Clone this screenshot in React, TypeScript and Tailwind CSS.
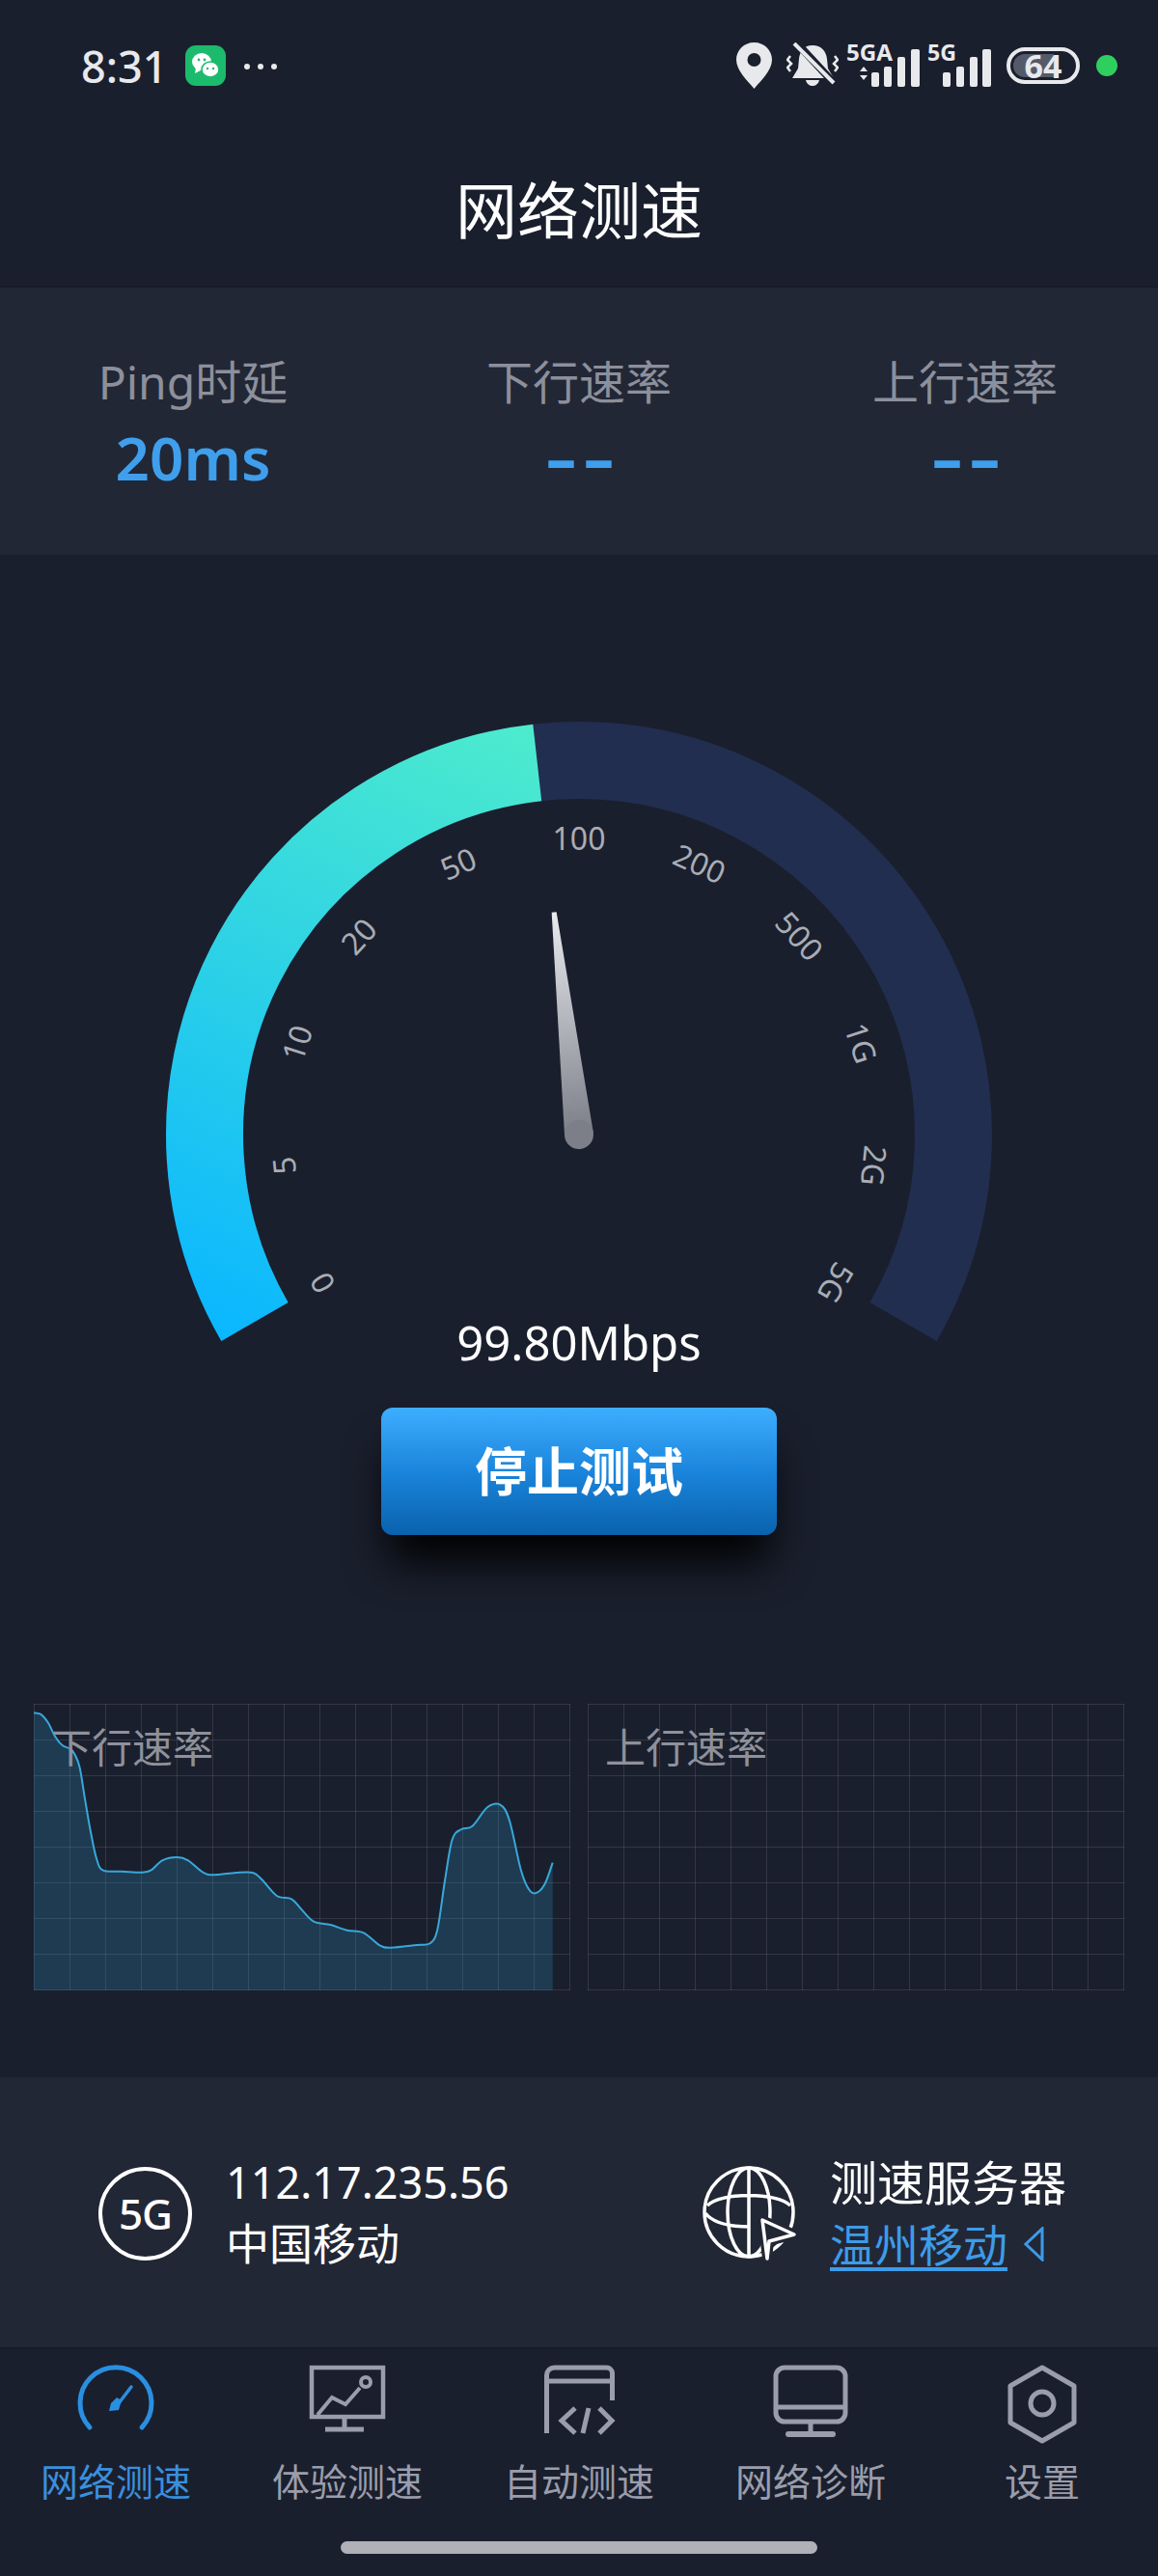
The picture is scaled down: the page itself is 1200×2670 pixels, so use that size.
import React from 'react';

const LABELS = ['0', '5', '10', '20', '50', '100', '200', '500', '1G', '2G', '5G'];

// curve traced off the reference, x/y in chart pixels
const CURVE: [number, number][] = [
  [92,106],[110,110],[130,135],[150,180],[170,208],[195,222],[215,270],[230,370],[245,470],[262,560],[280,596],
  [330,599],[385,602],[410,595],[440,565],[480,555],[510,565],[550,602],[580,610],[640,603],[685,603],[710,625],
  [750,675],[790,685],[815,715],[850,755],[895,765],[940,782],[985,790],[1030,830],[1060,836],[1130,828],[1165,823],
  [1185,780],[1205,630],[1225,500],[1250,468],[1280,458],[1320,400],[1355,392],[1380,440],[1410,590],[1430,650],
  [1450,667],[1475,640],[1497,572],
].map(([x, y]) => [(x - 92) / 2.613, (y - 78) / 3] as [number, number]);

const smoothPath = (pts: [number, number][]) => {
  let d = `M${pts[0][0].toFixed(1)} ${pts[0][1].toFixed(1)}`;
  for (let i = 0; i < pts.length - 1; i++) {
    const p0 = pts[Math.max(i - 1, 0)];
    const p1 = pts[i];
    const p2 = pts[i + 1];
    const p3 = pts[Math.min(i + 2, pts.length - 1)];
    const c1x = p1[0] + (p2[0] - p0[0]) / 6;
    const c1y = p1[1] + (p2[1] - p0[1]) / 6;
    const c2x = p2[0] - (p3[0] - p1[0]) / 6;
    const c2y = p2[1] - (p3[1] - p1[1]) / 6;
    d += `C${c1x.toFixed(1)} ${c1y.toFixed(1)} ${c2x.toFixed(1)} ${c2y.toFixed(1)} ${p2[0].toFixed(1)} ${p2[1].toFixed(1)}`;
  }
  return d;
};

const polar = (deg: number, r: number) => {
  const a = (deg * Math.PI) / 180;
  return [600 + r * Math.sin(a), 1176 - r * Math.cos(a)];
};

const arc = (from: number, to: number, r: number) => {
  const [x1, y1] = polar(from, r);
  const [x2, y2] = polar(to, r);
  return `M${x1} ${y1}A${r} ${r} 0 ${to - from > 180 ? 1 : 0} 1 ${x2} ${y2}`;
};

const Gauge = () => (
  <svg viewBox="160 740 880 655" className="mx-auto block h-[655px] w-[880px]">
    <defs>
      <linearGradient id="progress" gradientUnits="userSpaceOnUse" x1="250" y1="1390" x2="540" y2="750">
        <stop offset="0" stopColor="#0bb7ff" />
        <stop offset="1" stopColor="#4debcd" />
      </linearGradient>
      <linearGradient id="needle" gradientUnits="userSpaceOnUse" x1="600" y1="944" x2="600" y2="1176">
        <stop offset="0" stopColor="#e9eaef" />
        <stop offset="1" stopColor="#7c7e88" />
      </linearGradient>
    </defs>
    <path d={arc(-120, 120, 388)} fill="none" stroke="#212e4f" strokeWidth={80} />
    <path d={arc(-120, -6.4, 388)} fill="none" stroke="url(#progress)" strokeWidth={80} />
    {LABELS.map((label, i) => {
      const deg = -120 + i * 24;
      return (
        <text
          key={label}
          x={600}
          y={868}
          fontSize={32}
          fill="#a9adb5"
          textAnchor="middle"
          dominantBaseline="central"
          transform={`rotate(${deg} 600 1176)`}
        >
          {label}
        </text>
      );
    })}
    <g transform="rotate(-6.4 600 1176)">
      <polygon points="597.5,944 602.5,944 615,1176 585,1176" fill="url(#needle)" />
      <circle cx={600} cy={1176} r={15} fill="#7c7e88" />
    </g>
  </svg>
);

const SpeedChart = ({ label, curve }: { label: string; curve?: boolean }) => {
  const line = curve ? smoothPath(CURVE) : '';
  const lastX = CURVE[CURVE.length - 1][0];
  return (
    <div className="relative h-[298px] w-[556px]">
      <svg viewBox="0 0 556 298" className="block h-[298px] w-[556px]">
        {Array.from({ length: 16 }, (_, i) => (
          <line key={i} x1={i * 37 + 0.5} x2={i * 37 + 0.5} y1={0} y2={297} stroke="#ffffff" strokeOpacity={0.11} />
        ))}
        {Array.from({ length: 9 }, (_, i) => (
          <line key={i} y1={i * 37 + 0.5} y2={i * 37 + 0.5} x1={0} x2={556} stroke="#ffffff" strokeOpacity={0.11} />
        ))}
        {curve && (
          <>
            <path d={`${line}L${lastX} 297L0 297Z`} fill="#2c9ad0" fillOpacity={0.23} />
            <path d={line} fill="none" stroke="#38a8da" strokeWidth={2} />
          </>
        )}
      </svg>
      <div className="absolute left-[18px] top-[21px] text-[42px] leading-[48px] text-[#8e919b]">{label}</div>
    </div>
  );
};

const Stat = ({ label, value, dashes }: { label: string; value: string; dashes?: boolean }) => (
  <div className="flex flex-col items-center">
    <div className="text-[48px] leading-[60px] text-[#8c909c]">{label}</div>
    <div className={`mt-[10px] h-[76px] text-[62px] leading-[76px] text-[#3f9fec] ${dashes ? 'pl-[10px] font-extrabold tracking-[8px]' : 'font-semibold'}`}>
      {value}
    </div>
  </div>
);

const Bars = ({ w }: { w: number }) => (
  <svg width={w} height={44} viewBox={`0 0 ${w} 44`}>
    <rect x={w - 50} y={29} width={8} height={15} rx={2} fill="#e8e9ec" />
    <rect x={w - 36} y={23} width={8} height={21} rx={2} fill="#e8e9ec" />
    <rect x={w - 22} y={13} width={8} height={31} rx={2} fill="#e8e9ec" />
    <rect x={w - 9} y={5} width={9} height={39} rx={2} fill="#e8e9ec" />
  </svg>
);

const StatusBar = () => (
  <div className="flex h-[136px] items-center justify-between pl-[84px] pr-[42px]">
    <div className="flex items-center">
      <span className="w-[94px] text-[45px] leading-none font-medium text-[#e8e9ec]">8:31</span>
      <svg width={42} height={42} viewBox="0 0 42 42" className="ml-[14px]">
        <rect width={42} height={42} rx={11} fill="#1cba6c" />
        <ellipse cx={17} cy={17} rx={10} ry={9} fill="#ffffff" />
        <path d="M11 23l-1 6 6-3z" fill="#ffffff" />
        <ellipse cx={26} cy={25} rx={9} ry={8} fill="#ffffff" stroke="#1cba6c" strokeWidth={1.5} />
        <circle cx={14} cy={15} r={1.4} fill="#1cba6c" />
        <circle cx={20} cy={15} r={1.4} fill="#1cba6c" />
        <circle cx={23} cy={24} r={1.2} fill="#1cba6c" />
        <circle cx={29} cy={24} r={1.2} fill="#1cba6c" />
      </svg>
      <svg width={36} height={8} viewBox="0 0 36 8" className="ml-[18px] mt-[2px]">
        <circle cx={4} cy={4} r={3} fill="#e8e9ec" />
        <circle cx={18} cy={4} r={3} fill="#e8e9ec" />
        <circle cx={32} cy={4} r={3} fill="#e8e9ec" />
      </svg>
    </div>
    <div className="flex items-center">
      <svg width={37} height={48} viewBox="0 0 37 48">
        <path d="M18.5 0C8 0 0 8 0 18c0 11 12 22 18.5 30C25 40 37 29 37 18 37 8 29 0 18.5 0z" fill="#e8e9ec" />
        <circle cx={18.5} cy={18} r={7} fill="#1a1f2d" />
      </svg>
      <svg width={54} height={48} viewBox="0 0 54 48" className="ml-[15px]">
        <path d="M27 3c9 0 14 6 15 14l1 10 6 10H6l6-10 1-10C14 9 18 3 27 3z" fill="#e8e9ec" />
        <path d="M20 39h14c-1 4-4 6-7 6s-6-2-7-6z" fill="#e8e9ec" />
        <path d="M12 2l37 40" stroke="#1a1f2d" strokeWidth={8} />
        <path d="M8 1l41 41" stroke="#e8e9ec" strokeWidth={4} />
        <path d="M4 14L1 18l4 4-4 4 3 4M50 14l3 4-4 4 4 4-3 4" fill="none" stroke="#e8e9ec" strokeWidth={2.5} />
      </svg>
      <div className="relative ml-[8px] h-[44px] w-[76px]">
        <svg width={76} height={44} viewBox="0 0 76 44" className="block overflow-visible">
          <text x={0} y={17} fontSize={24} fontWeight={700} fill="#e8e9ec" textLength={48} lengthAdjust="spacingAndGlyphs">5GA</text>
          <path d="M14 28l4-5 4 5zM14 32l4 5 4-5z" fill="#e8e9ec" />
          <rect x={26} y={29} width={8} height={15} rx={2} fill="#e8e9ec" />
          <rect x={39} y={23} width={8} height={21} rx={2} fill="#e8e9ec" />
          <rect x={53} y={13} width={8} height={31} rx={2} fill="#e8e9ec" />
          <rect x={67} y={5} width={9} height={39} rx={2} fill="#e8e9ec" />
        </svg>
      </div>
      <div className="relative ml-[8px] h-[44px] w-[66px]">
        <svg width={30} height={20} viewBox="0 0 30 20" className="absolute left-0 top-0 overflow-visible">
          <text x={0} y={17} fontSize={24} fontWeight={700} fill="#e8e9ec" textLength={30} lengthAdjust="spacingAndGlyphs">5G</text>
        </svg>
        <div className="flex justify-end"><Bars w={50} /></div>
      </div>
      <div className="relative ml-[16px] flex h-[38px] w-[76px] items-center rounded-[19px] border-[4px] border-[#e8e9ec] p-[3px]">
        <div className="h-full w-[68%] rounded-l-[13px] bg-[#555a68]" />
        <span className="absolute inset-0 flex items-center justify-center text-[34px] leading-none font-bold text-[#e8e9ec]">64</span>
      </div>
      <div className="ml-[17px] h-[22px] w-[22px] rounded-full bg-[#2fcf5f]" />
    </div>
  </div>
);

const Globe = () => (
  <svg width={100} height={100} viewBox="0 0 100 100" fill="none" stroke="#ffffff" strokeWidth={3.5}>
    <circle cx={49} cy={49} r={46} />
    <ellipse cx={49} cy={49} rx={22} ry={46} />
    <path d="M49 3v92M6 42C20 28 78 28 92 42M4 50c8 10 26 14 46 14" />
    <polygon points="63,57 96,72 70,79 68,97" fill="#222735" stroke="#222735" strokeWidth={10} />
    <polygon points="63,57 96,72 70,79 68,97" fill="#222735" strokeLinejoin="round" />
  </svg>
);

const NavGauge = () => (
  <svg width={80} height={84} viewBox="0 0 80 84" fill="none">
    <path d="M13 66a37 37 0 1 1 54 0" stroke="#2a8fe0" strokeWidth={5} strokeLinecap="round" />
    <path d="M56 24L43 41" stroke="#2a8fe0" strokeWidth={3.5} strokeLinecap="round" />
    <path d="M46 38l-3 10-10 1 2-8 6-6z" fill="#2a8fe0" />
  </svg>
);

const NavChart = () => (
  <svg width={80} height={84} viewBox="0 0 80 84" fill="none" stroke="#9a9dab" strokeWidth={4.5}>
    <path d="M3 4h74v51H3z" />
    <path d="M9 53l15-18 14 7 15-17" strokeWidth={4} />
    <circle cx={59} cy={19} r={5} strokeWidth={4} />
    <path d="M37 55v13M17 68h40" strokeWidth={5} />
  </svg>
);

const NavCode = () => (
  <svg width={80} height={84} viewBox="0 0 80 84" fill="none" stroke="#9a9dab" strokeWidth={5}>
    <path d="M6.5 72V12a8 8 0 0 1 8-8h54a6 6 0 0 1 6 6v28M6.5 18h68" />
    <path d="M36 46L22 59l14 13M61 46l13 13-13 13M50 46l-6 26" />
  </svg>
);

const NavMonitor = () => (
  <svg width={80} height={84} viewBox="0 0 80 84" fill="none" stroke="#9a9dab" strokeWidth={5}>
    <rect x={4} y={4} width={72} height={56} rx={9} />
    <path d="M4 45h72M40 60v12" />
    <path d="M17 73h46" strokeWidth={6} strokeLinecap="round" />
  </svg>
);

const NavHex = () => (
  <svg width={80} height={84} viewBox="0 0 80 84" fill="none" stroke="#9a9dab" strokeWidth={5}>
    <path d="M40 4l33 19v38L40 80 7 61V23z" strokeLinejoin="round" />
    <circle cx={40} cy={41} r={12} />
  </svg>
);

const NavItem = ({ icon, label, active }: { icon: React.ReactNode; label: string; active?: boolean }) => (
  <div className="flex flex-col items-center">
    {icon}
    <div className={`mt-[12px] text-[39px] leading-[52px] ${active ? 'text-[#3a8fdd]' : 'text-[#9a9dab]'}`}>{label}</div>
  </div>
);

export default function App() {
  return (
    <div className="flex h-[2670px] w-[1200px] flex-col overflow-hidden bg-[#1a1f2d] font-['Noto_Sans','Noto_Sans_CJK_SC',sans-serif] text-white">
      <header className="h-[298px] border-b border-[#151925]">
        <StatusBar />
        <h1 className="mt-[44px] text-center text-[64px] leading-[76px] font-normal">网络测速</h1>
      </header>

      <section className="grid h-[277px] grid-cols-3 items-center bg-[#222735] pt-[4px]">
        <Stat label="Ping时延" value="20ms" />
        <Stat label="下行速率" value="––" dashes />
        <Stat label="上行速率" value="––" dashes />
      </section>

      <main className="flex flex-1 flex-col">
        <div className="mt-[165px]">
          <Gauge />
        </div>
        <div className="-mt-[34px] text-center text-[49px] leading-[60px]">99.80Mbps</div>
        <button className="mx-auto mt-[38px] h-[132px] w-[410px] rounded-[12px] bg-gradient-to-b from-[#3daeff] via-[#1a85dc] to-[#0a62ad] text-[54px] font-semibold shadow-[0_36px_44px_-8px_rgba(0,0,0,0.95)]">
          停止测试
        </button>
        <div className="mt-[175px] flex gap-[18px] px-[35px]">
          <SpeedChart label="下行速率" curve />
          <SpeedChart label="上行速率" />
        </div>
      </main>

      <section className="flex h-[280px] items-center bg-[#222735] pl-[102px] pt-[2px]">
        <div className="flex h-[97px] w-[97px] items-center justify-center rounded-full border-[4px] border-white text-[44px] font-medium tracking-[-1px]">5G</div>
        <div className="ml-[35px] w-[493px]">
          <div className="text-[45px] leading-[64px]">112.17.235.56</div>
          <div className="text-[45px] leading-[64px]">中国移动</div>
        </div>
        <Globe />
        <div className="ml-[33px]">
          <div className="text-[49px] leading-[64px]">测速服务器</div>
          <div className="flex items-center text-[46px] leading-[64px] text-[#3d9be9]">
            <span className="underline underline-offset-[6px]">温州移动</span>
            <svg width={22} height={36} viewBox="0 0 22 36" className="ml-[16px]" fill="none" stroke="#3d9be9" strokeWidth={3}>
              <path d="M20 2v32L3 18z" />
            </svg>
          </div>
        </div>
      </section>

      <nav className="relative grid h-[237px] grid-cols-5 border-t border-[#151925] bg-[#1a1f2d] pt-[16px]">
        <NavItem icon={<NavGauge />} label="网络测速" active />
        <NavItem icon={<NavChart />} label="体验测速" />
        <NavItem icon={<NavCode />} label="自动测速" />
        <NavItem icon={<NavMonitor />} label="网络诊断" />
        <NavItem icon={<NavHex />} label="设置" />
        <div className="absolute bottom-[23px] left-[353px] h-[13px] w-[494px] rounded-full bg-[#b0b1b8]" />
      </nav>
    </div>
  );
}
